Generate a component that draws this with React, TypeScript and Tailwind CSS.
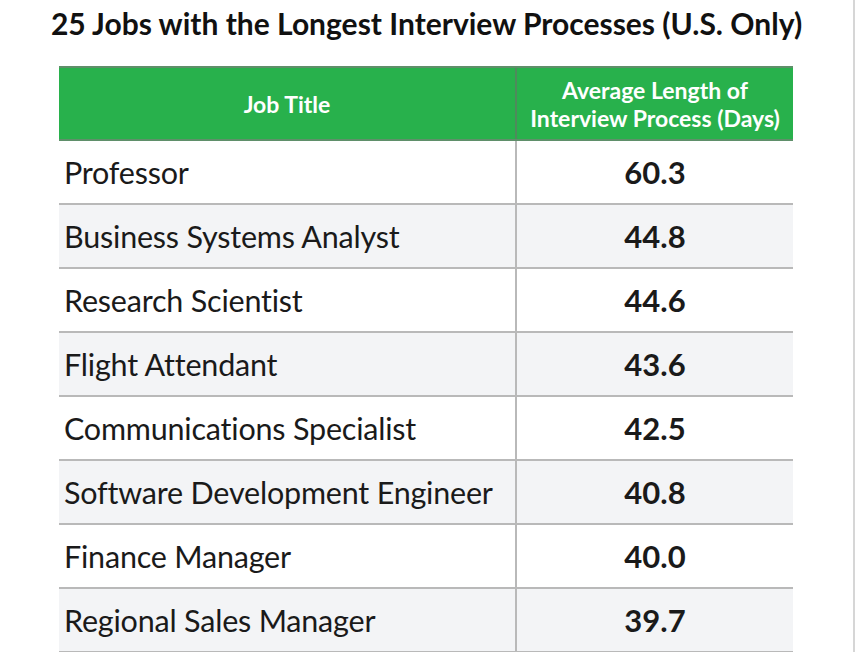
import React from 'react';

interface Row {
    title: string;
    days: string;
}

const rows: Row[] = [
    { title: 'Professor', days: '60.3' },
    { title: 'Business Systems Analyst', days: '44.8' },
    { title: 'Research Scientist', days: '44.6' },
    { title: 'Flight Attendant', days: '43.6' },
    { title: 'Communications Specialist', days: '42.5' },
    { title: 'Software Development Engineer', days: '40.8' },
    { title: 'Finance Manager', days: '40.0' },
    { title: 'Regional Sales Manager', days: '39.7' },
];

const App: React.FC = () => {
    return (
        <div className="w-[858px] h-[652px] overflow-hidden bg-white font-['Lato',sans-serif] text-[#1a1a1a]">
            <div className="w-[855px] h-full border-r-2 border-[#d6d6d6]">
                <h1 className="pt-[3px] text-center text-[30px] leading-[40px] font-bold text-[#111]">
                    25 Jobs with the Longest Interview Processes (U.S. Only)
                </h1>
                <div className="mt-[23px] ml-[59px] w-[734px]">
                    <div className="flex h-[75px] bg-[#28b14c] border-t-2 border-b-2 border-[#5f8f6a] text-white font-bold text-[23px] leading-[28px]">
                        <div className="w-[458px] flex items-center justify-center border-r-2 border-[#4f8a5c]">Job Title</div>
                        <div className="flex-1 flex items-center justify-center text-center">
                            Average Length of<br />Interview Process (Days)
                        </div>
                    </div>
                    {rows.map((row, i) => (
                        <div
                            key={row.title}
                            className={`flex h-[64px] border-b-2 border-[#b9b9b9] ${i % 2 === 1 ? 'bg-[#f3f4f6]' : 'bg-white'}`}
                        >
                            <div className="w-[458px] flex items-center pl-[5px] pt-[1px] text-[30.5px] tracking-[-0.2px] border-r-2 border-[#b9b9b9]">
                                {row.title}
                            </div>
                            <div className="flex-1 flex items-center justify-center pt-[1px] text-[31px] font-bold">
                                {row.days}
                            </div>
                        </div>
                    ))}
                </div>
            </div>
        </div>
    );
};

export default App;
